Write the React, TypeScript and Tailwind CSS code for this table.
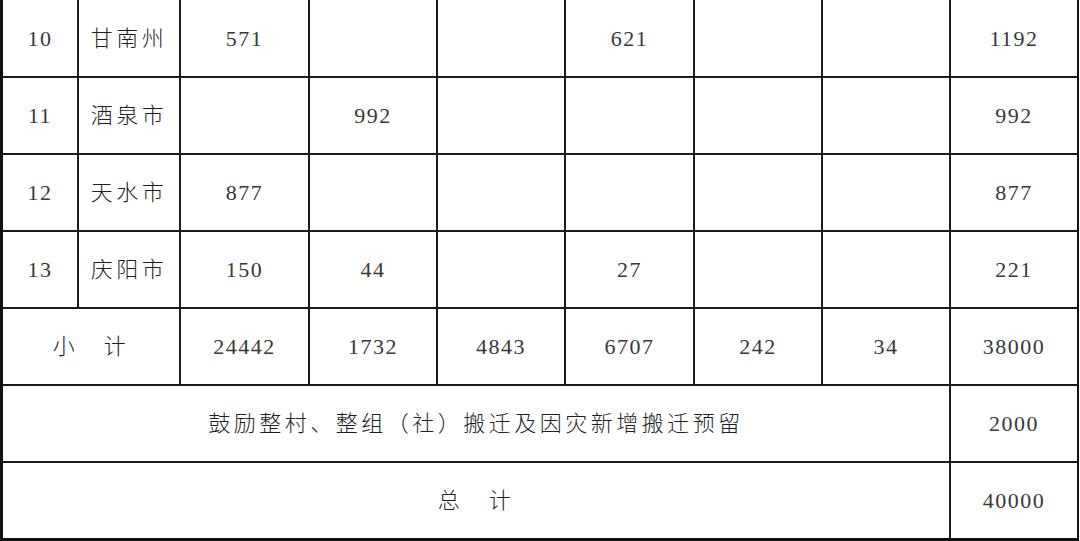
import React from 'react';

type Row = { no: string; city: string; vals: string[] };

const rows: Row[] = [
  { no: '10', city: '甘南州', vals: ['571', '', '', '621', '', '', '1192'] },
  { no: '11', city: '酒泉市', vals: ['', '992', '', '', '', '', '992'] },
  { no: '12', city: '天水市', vals: ['877', '', '', '', '', '', '877'] },
  { no: '13', city: '庆阳市', vals: ['150', '44', '', '27', '', '', '221'] },
];

const subtotal = ['24442', '1732', '4843', '6707', '242', '34', '38000'];

const cell = 'flex items-center justify-center border-b-2 border-[#1c1c1c]';
const num = 'tracking-[1.5px]';
const cjk = 'tracking-[3.5px] font-light text-[#1f1f1f]';

const App: React.FC = () => {
  return (
    <div className="w-[1080px] h-[541px] bg-white overflow-hidden">
      <div
        className="w-[1079px] border-l-[3px] border-r-2 border-b-[3px] border-[#111] text-[22px] text-[#383838] grid grid-cols-[76px_102px_129px_128px_128px_129px_128px_128px_126px] grid-rows-[78px_77px_77px_77px_77px_77px_75px]"
        style={{ fontFamily: '"Liberation Serif", "Noto Sans CJK SC", serif' }}
      >
        {rows.map((r) => (
          <React.Fragment key={r.no}>
            <div className={`${cell} border-r-2 ${num}`}>{r.no}</div>
            <div className={`${cell} border-r-2 ${cjk}`}>{r.city}</div>
            {r.vals.map((v, i) => (
              <div key={i} className={`${cell} ${i < 6 ? 'border-r-2' : ''} ${num}`}>
                {v}
              </div>
            ))}
          </React.Fragment>
        ))}

        <div className={`${cell} col-span-2 border-r-2 ${cjk}`}>小　计</div>
        {subtotal.map((v, i) => (
          <div key={i} className={`${cell} ${i < 6 ? 'border-r-2' : ''} ${num}`}>
            {v}
          </div>
        ))}

        <div className={`${cell} col-span-8 border-r-2 ${cjk}`}>鼓励整村、整组（社）搬迁及因灾新增搬迁预留</div>
        <div className={`${cell} ${num}`}>2000</div>

        <div className={`flex items-center justify-center col-span-8 border-r-2 border-[#1c1c1c] ${cjk}`}>总　计</div>
        <div className={`flex items-center justify-center ${num}`}>40000</div>
      </div>
    </div>
  );
};

export default App;
